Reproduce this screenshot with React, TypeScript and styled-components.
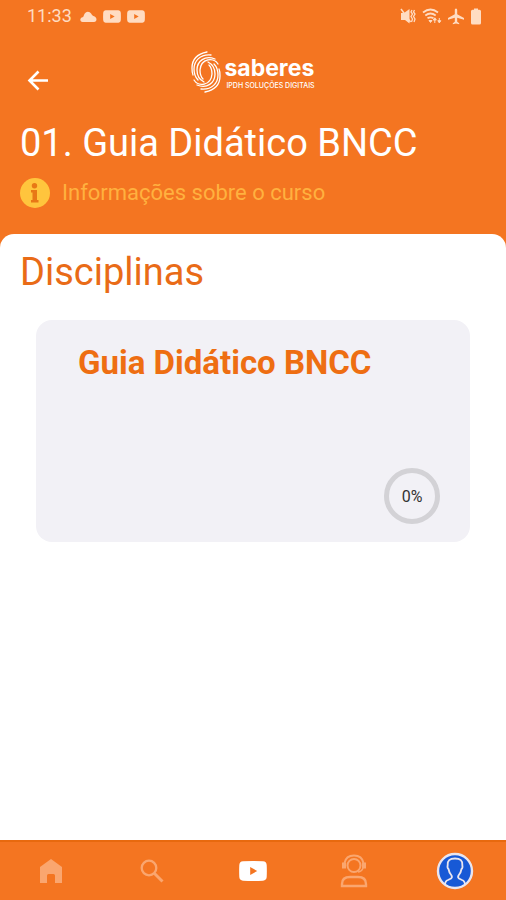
import React from 'react';
import styled, { createGlobalStyle } from 'styled-components';

const orange = '#f47521';
const peach = '#ffdcc2';

const GlobalStyle = createGlobalStyle`
  *, *::before, *::after { box-sizing: border-box; }
  body { margin: 0; background: ${orange}; font-family: Roboto, "Liberation Sans", sans-serif; }
  h1, h2, h3, p { margin: 0; }
  svg { display: block; flex: none; }
`;

const Screen = styled.div`
  min-height: 100vh;
  display: flex;
  flex-direction: column;
  background: ${orange};
`;

const StatusBar = styled.div`
  display: flex;
  justify-content: space-between;
  align-items: center;
  height: 32px;
  padding: 0 24px 0 27px;
  color: ${peach};
`;

const StatusGroup = styled.div`
  display: flex;
  align-items: center;
  gap: 6px;
`;

const Clock = styled.time`
  font-size: 18px;
  line-height: 32px;
  margin-right: 2px;
`;

const TopBar = styled.header`
  display: grid;
  grid-template-columns: 1fr auto 1fr;
  align-items: center;
  height: 80px;
  padding: 0 20px;
`;

const BackButton = styled.button`
  justify-self: start;
  display: flex;
  padding: 5px;
  margin-top: 16px;
  border: 0;
  background: none;
  color: #fff;
  cursor: pointer;
`;

const Brand = styled.div`
  display: flex;
  align-items: center;
  gap: 3px;
  color: #fff;
`;

const BrandText = styled.div`
  display: flex;
  flex-direction: column;
`;

const BrandName = styled.span`
  font: 700 23px/28px Inter, "DejaVu Sans", sans-serif;
`;

const BrandTag = styled.span`
  padding-left: 2px;
  font: 500 7px/8px Inter, "DejaVu Sans", sans-serif;
  white-space: nowrap;
`;

const CourseHead = styled.section`
  display: flex;
  flex-direction: column;
  align-items: flex-start;
  gap: 10px;
  padding: 7px 20px 25px;
`;

const CourseTitle = styled.h1`
  font-size: 38px;
  font-weight: 400;
  line-height: 48px;
  color: #fff;
`;

const InfoLink = styled.a`
  display: flex;
  align-items: center;
  gap: 12px;
  font-size: 22px;
  line-height: 32px;
  color: #ffb13f;
  text-decoration: none;
`;

const Panel = styled.main`
  flex: 1;
  padding: 14px 36px 32px;
  border-radius: 14px 14px 0 0;
  background: #fff;
`;

const SectionTitle = styled.h2`
  margin: 0 -16px 24px;
  font-size: 38px;
  font-weight: 400;
  line-height: 48px;
  color: #e96b17;
`;

const Card = styled.article`
  display: flex;
  flex-direction: column;
  justify-content: space-between;
  min-height: 222px;
  padding: 22px 30px 18px 42px;
  border-radius: 16px;
  background: #f2f1f6;
`;

const CardTitle = styled.h3`
  font-size: 33px;
  font-weight: 700;
  line-height: 42px;
  color: #ee6e12;
`;

const Progress = styled.div`
  align-self: flex-end;
  display: grid;
  place-items: center;
  width: 56px;
  height: 56px;
  border: 5px solid #d3d2d6;
  border-radius: 50%;
  font-size: 16px;
  color: #333;
`;

const NavBar = styled.nav`
  display: grid;
  grid-template-columns: repeat(5, 1fr);
  height: 60px;
  border-top: 2px solid #e8690e;
  background: ${orange};
`;

const NavButton = styled.button<{ $active?: boolean }>`
  display: grid;
  place-items: center;
  padding: 0;
  border: 0;
  background: none;
  color: ${({ $active }) => ($active ? '#fff' : '#faa66f')};
  cursor: pointer;
`;

const VideoIcon = ({ width, height }: { width: number; height: number }) => (
  <svg width={width} height={height} viewBox="0 0 28 20" aria-hidden="true">
    <path
      fill="currentColor"
      fillRule="evenodd"
      d="M4 .3Q14 -.1 24 .3Q27.500.6 27.700 4Q28 10 27.700 16Q27.500 19.400 24 19.700Q14 20.100 4 19.700Q.5 19.400.3 16Q0 10 .3 4Q.5.6 4 .3ZM11.200 6v8l7-4Z"
    />
  </svg>
);

const CloudIcon = () => (
  <svg width="17" height="11" viewBox="0 0 17 11" fill="currentColor" aria-hidden="true">
    <path d="M2.6 11C-.4 10.8-.5 6.8 2.6 6.3 3.2 5.9 3.5 5.6 3.9 4.2 5 .3 9.2-.7 11.3 2.8c.5.9 1 1.7 2 2.1 1.3.3 2.2.9 2.8 2.1.9 1.9.1 4-2.1 4Z" />
  </svg>
);

const MuteIcon = () => (
  <svg width="16" height="17" viewBox="0 0 16 17" aria-hidden="true">
    <path fill="currentColor" d="M1 5h3L9.500 1v14.500L5 12H1Z" />
    <path d="M1 1 10.500 14" stroke="currentColor" strokeWidth="1.500" />
    <path d="M12 2l-1 2 1.500 2L11 8.500l1.500 2.500-1 3M14.500 2l-1 2L15 6l-1.500 2.500L15 11l-1 3" fill="none" stroke="currentColor" strokeWidth="1.300" />
  </svg>
);

const WifiIcon = () => (
  <svg width="20" height="17" viewBox="0 0 20 17" fill="none" stroke="currentColor" strokeWidth="1.800" aria-hidden="true">
    <path d="M1 4.500Q8.500-1.500 16 4.500M3.300 7.500Q8.500 3.500 13.700 7.500M5.500 10.300Q8.500 8.300 11.500 10.300" />
    <path d="M7 12.500h3L8.500 14.500ZM11.300 12h3l-1.500-2.200ZM12.800 12v3M15.800 12.700h3l-1.500 2.200ZM17.300 13v-3" strokeWidth="1" fill="currentColor" />
  </svg>
);

const PlaneIcon = () => (
  <svg width="16" height="17" viewBox="0 0 16 17" fill="currentColor" aria-hidden="true">
    <path d="M8 .5c.8 0 1.200.8 1.200 1.700v4L16 10v1.700l-6.800-2v4l2 1.500v1L8 15.400l-3.200.8v-1l2-1.500v-4l-6.800 2V10l6.800-3.800v-4C6.800 1.300 7.200.5 8 .5Z" />
  </svg>
);

const BatteryIcon = () => (
  <svg width="12" height="17" viewBox="0 0 12 17" fill="currentColor" aria-hidden="true">
    <path d="M4 1.800V.5h4v1.300h1.500q1.500 0 1.500 1.500V15q0 1.500-1.500 1.500h-7Q1 16.500 1 15V3.300q0-1.500 1.500-1.500Z" />
  </svg>
);

const ArrowIcon = () => (
  <svg width="26" height="26" viewBox="0 0 26 26" fill="none" stroke="currentColor" strokeWidth="2.600" aria-hidden="true">
    <path d="M23 13.500H5M13.500 4.500l-9 9 9 9" />
  </svg>
);

const SwirlIcon = () => (
  <svg width="30" height="42" viewBox="0 0 30 42" fill="none" stroke="currentColor" strokeWidth="1.300" strokeLinecap="round" aria-hidden="true">
    <path d="M16 1C6 3 1 9 1 17c0 3 0 5 1 7" />
    <path d="M20 4C9 3 3 10 3 18c0 5 1 8 4 11" />
    <path d="M24 8C14 4 6 10 6 19c0 6 3 10 7 12" />
    <path d="M27 13C23 6 10 7 9 19c0 4 1 7 3 9" />
    <path d="M14 41c10-2 15-8 15-16 0-3 0-5-1-7" />
    <path d="M10 38c11 1 17-6 17-14 0-5-1-8-4-11" />
    <path d="M6 34c10 4 18-2 18-11 0-6-3-10-7-12" />
    <path d="M3 29c4 7 17 6 18-6 0-4-1-7-3-9" />
  </svg>
);

const InfoIcon = () => (
  <svg width="30" height="30" viewBox="0 0 30 30" aria-hidden="true">
    <circle cx="15" cy="15" r="15" fill="#ffc53d" />
    <circle cx="14.500" cy="7.800" r="2.700" fill="#e87816" />
    <path fill="#e87816" d="M11 12h6v10h1.500v2.500H11V22h1.500v-7.500H11Z" />
  </svg>
);

const HomeIcon = () => (
  <svg width="22" height="24" viewBox="0 0 22 24" fill="currentColor" aria-hidden="true">
    <path d="M11 0 22 8v16h-7v-7.500q0-1.500-1.500-1.500h-5Q7 15 7 16.500V24H0V8Z" />
  </svg>
);

const SearchIcon = () => (
  <svg width="24" height="24" viewBox="0 0 24 24" fill="none" stroke="currentColor" strokeWidth="2.300" aria-hidden="true">
    <circle cx="9" cy="9" r="7.300" />
    <path d="m14.500 14.500 8 8" strokeWidth="3" />
  </svg>
);

const SupportIcon = () => (
  <svg width="28" height="34" viewBox="0 0 28 34" fill="none" stroke="currentColor" strokeWidth="2" aria-hidden="true">
    <circle cx="14" cy="11.500" r="6.500" />
    <path d="M4.500 9Q6 1.500 14 1.500t9.500 7.500" />
    <path d="M4 8.500v6M24 8.500v6" strokeWidth="4" />
    <path d="M23 14q-1 3.500-5 4" strokeWidth="1.500" />
    <path d="M2 32v-2q0-7 8-7h8q8 0 8 7v2Z" strokeWidth="2.400" />
  </svg>
);

const ProfileIcon = () => (
  <svg width="38" height="38" viewBox="0 0 38 38" aria-hidden="true">
    <circle cx="19" cy="19" r="17" fill="#1759d6" stroke="#e9e5ef" strokeWidth="2.400" />
    <path
      d="M9 33q0-4 3-5l3-1.500q1.500-1 .5-3Q13 20.500 12.500 17q-1.500-1-.8-4Q11 6.500 19 6.500T26.300 13q.7 3-.8 4-.5 3.500-3 6.500-1 2 .5 3l3 1.500q3 1 3 5"
      fill="none"
      stroke="#e9e5ef"
      strokeWidth="1.800"
    />
  </svg>
);

export default function App() {
  return (
    <>
      <GlobalStyle />
      <Screen>
        <StatusBar>
          <StatusGroup>
            <Clock>11:33</Clock>
            <CloudIcon />
            <VideoIcon width={18} height={13} />
            <VideoIcon width={18} height={13} />
          </StatusGroup>
          <StatusGroup>
            <MuteIcon />
            <WifiIcon />
            <PlaneIcon />
            <BatteryIcon />
          </StatusGroup>
        </StatusBar>
        <TopBar>
          <BackButton type="button" aria-label="Voltar">
            <ArrowIcon />
          </BackButton>
          <Brand>
            <SwirlIcon />
            <BrandText>
              <BrandName>saberes</BrandName>
              <BrandTag>IPDH SOLUÇÕES DIGITAIS</BrandTag>
            </BrandText>
          </Brand>
        </TopBar>
        <CourseHead>
          <CourseTitle>01. Guia Didático BNCC</CourseTitle>
          <InfoLink href="#informacoes">
            <InfoIcon />
            Informações sobre o curso
          </InfoLink>
        </CourseHead>
        <Panel>
          <SectionTitle>Disciplinas</SectionTitle>
          <Card>
            <CardTitle>Guia Didático BNCC</CardTitle>
            <Progress role="progressbar" aria-label="Progresso" aria-valuenow={0} aria-valuemin={0} aria-valuemax={100}>
              0%
            </Progress>
          </Card>
        </Panel>
        <NavBar>
          <NavButton type="button" aria-label="Início"><HomeIcon /></NavButton>
          <NavButton type="button" aria-label="Buscar"><SearchIcon /></NavButton>
          <NavButton type="button" aria-label="Vídeos" $active><VideoIcon width={28} height={20} /></NavButton>
          <NavButton type="button" aria-label="Suporte"><SupportIcon /></NavButton>
          <NavButton type="button" aria-label="Perfil"><ProfileIcon /></NavButton>
        </NavBar>
      </Screen>
    </>
  );
}
